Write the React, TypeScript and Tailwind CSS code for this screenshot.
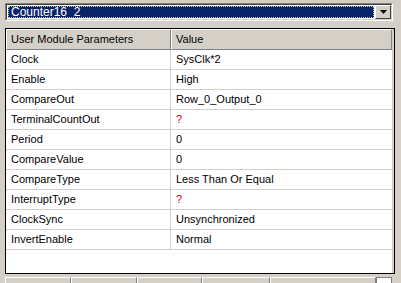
import React from "react";

const rows: { name: string; value: string; missing?: boolean }[] = [
  { name: "Clock", value: "SysClk*2" },
  { name: "Enable", value: "High" },
  { name: "CompareOut", value: "Row_0_Output_0" },
  { name: "TerminalCountOut", value: "?", missing: true },
  { name: "Period", value: "0" },
  { name: "CompareValue", value: "0" },
  { name: "CompareType", value: "Less Than Or Equal" },
  { name: "InterruptType", value: "?", missing: true },
  { name: "ClockSync", value: "Unsynchronized" },
  { name: "InvertEnable", value: "Normal" },
];

function ComboBox() {
  return (
    <div className="ml-[5px] mt-[3px] h-[18px] w-[388px] border border-t-[#808080] border-l-[#808080] border-b-white border-r-white">
      <div className="flex h-full border border-t-[#404040] border-l-[#404040] border-b-[#d4d0c8] border-r-[#d4d0c8] bg-white">
        <div className="m-px flex flex-1 items-center border border-dotted border-[#c8c4a0] bg-[#0a246a] pl-[2px] text-[12px] leading-none text-white">
          Counter16_2
        </div>
        <div className="flex w-[16px] items-center justify-center border border-t-white border-l-white border-b-[#404040] border-r-[#404040] bg-[#d4d0c8]">
          <svg width="7" height="4" viewBox="0 0 7 4">
            <path d="M0 0h7L3.5 4z" fill="#000" />
          </svg>
        </div>
      </div>
    </div>
  );
}

function ParamTable() {
  return (
    <div className="ml-[5px] mt-[7px] h-[246px] w-[390px] border border-black bg-white">
      <div className="flex h-full flex-col border-r-2 border-r-[#d4d0c8]">
        <div className="flex h-[21px] bg-[#d4d0c8]">
          <div className="flex w-[165px] items-center border border-t-white border-l-white border-b-[#808080] border-r-[#808080] pl-[4px]">
            User Module Parameters
          </div>
          <div className="flex flex-1 items-center border border-t-white border-l-white border-b-[#808080] border-r-[#808080] pl-[4px]">
            Value
          </div>
        </div>
        {rows.map((r) => (
          <div key={r.name} className="flex h-[20px] border-b border-b-[#d4d0c8]">
            <div className="flex w-[165px] items-center border-r border-r-[#d4d0c8] pl-[5px]">{r.name}</div>
            <div className={`flex flex-1 items-center pl-[5px] ${r.missing ? "text-[#d00000]" : ""}`}>{r.value}</div>
          </div>
        ))}
      </div>
    </div>
  );
}

function BottomStrip() {
  const widths = [66, 66, 65, 68, 106];
  return (
    <div className="ml-[5px] mt-[3px] flex h-[8px] w-[390px]">
      {widths.map((w, i) => (
        <div
          key={i}
          style={{ width: w }}
          className="border border-t-white border-l-white border-b-[#808080] border-r-[#808080] bg-[#d4d0c8]"
        />
      ))}
      <div className="w-[16px] border border-[#808080] bg-white" />
    </div>
  );
}

export default function App() {
  return (
    <div className="h-[283px] w-[401px] overflow-hidden bg-[#d4d0c8] font-['Liberation_Sans',Arial,sans-serif] text-[11px] text-black">
      <ComboBox />
      <ParamTable />
      <BottomStrip />
    </div>
  );
}
